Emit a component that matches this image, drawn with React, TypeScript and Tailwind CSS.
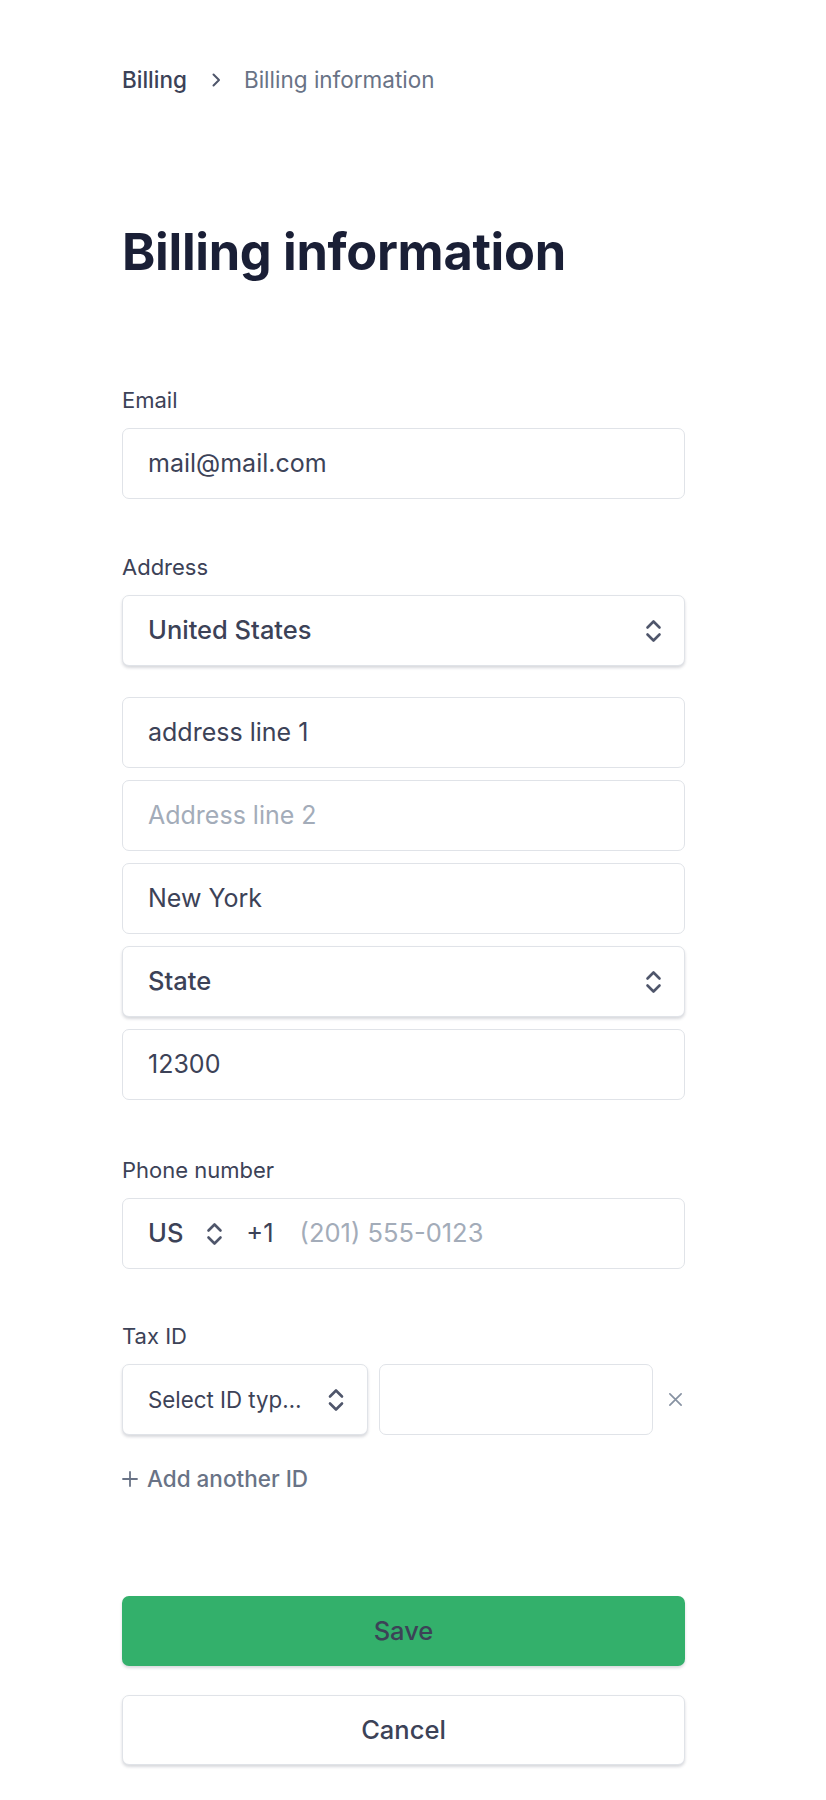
import React from 'react';

const font = { fontFamily: 'Inter, "Noto Sans", sans-serif' };

const UpDown = ({ className }: { className?: string }) => (
    <svg className={className} viewBox="0 0 18 26" fill="none" stroke="currentColor" strokeWidth="2.6" strokeLinecap="round" strokeLinejoin="round">
        <path d="M3 9.5 9 3.5 15 9.5" />
        <path d="M3 16.5 9 22.5 15 16.5" />
    </svg>
);

const Label = ({ children }: { children: React.ReactNode }) => (
    <div className="mb-[14px] mt-[1px] h-[28px] text-[22px] leading-[28px] text-[#3c4257]">{children}</div>
);

const Field = ({ value, placeholder }: { value?: string; placeholder?: string }) => (
    <div className="flex h-[71px] items-center rounded-[7px] border border-[#e0e3e8] bg-white px-[25px] text-[25px]">
        {value ? <span className="text-[#3c4257]">{value}</span> : <span className="text-[#a3acb9]">{placeholder}</span>}
    </div>
);

const Select = ({ value }: { value: string }) => (
    <div className="flex h-[71px] items-center justify-between rounded-[7px] border border-[#e0e3e8] bg-white pl-[25px] pr-[21px] text-[25.5px] font-medium text-[#3c4257] shadow-[0_2px_3px_rgba(60,66,87,0.2)]">
        <span>{value}</span>
        <UpDown className="h-[26px] w-[19px] text-[#4f566b]" />
    </div>
);

export default function App() {
    return (
        <div className="min-h-screen bg-white" style={font}>
            <div className="ml-[122px] w-[563px] pt-[66px] pb-[38px]">
                <nav className="flex h-[28px] items-center text-[22.5px] leading-[28px]">
                    <span className="font-medium text-[#3c4257]">Billing</span>
                    <svg className="ml-[24px] mr-[23px] h-[14px] w-[10px] text-[#4f566b]" viewBox="0 0 10 14" fill="none" stroke="currentColor" strokeWidth="2" strokeLinecap="round" strokeLinejoin="round">
                        <path d="M2.5 1.5 8 7l-5.5 5.5" />
                    </svg>
                    <span className="text-[#697386]">Billing information</span>
                </nav>

                <h1 className="mt-[128px] h-[60px] text-[50.5px] leading-[60px] font-bold tracking-[-0.3px] text-[#1a1f36]">
                    Billing information
                </h1>

                <div className="mt-[104px]">
                    <Label>Email</Label>
                    <Field value="mail@mail.com" />
                </div>

                <div className="mt-[54px]">
                    <Label>Address</Label>
                    <Select value="United States" />
                    <div className="mt-[31px] flex flex-col gap-[12px]">
                        <Field value="address line 1" />
                        <Field placeholder="Address line 2" />
                        <Field value="New York" />
                        <Select value="State" />
                        <Field value="12300" />
                    </div>
                </div>

                <div className="mt-[56px]">
                    <Label>Phone number</Label>
                    <div className="flex h-[71px] items-center rounded-[7px] border border-[#e0e3e8] bg-white px-[25px] text-[25.5px]">
                        <span className="font-medium text-[#3c4257]">US</span>
                        <UpDown className="ml-[22px] h-[26px] w-[19px] text-[#4f566b]" />
                        <span className="ml-[22px] text-[#3c4257]">+1</span>
                        <span className="ml-[26px] text-[#a3acb9]">(201) 555-0123</span>
                    </div>
                </div>

                <div className="mt-[53px]">
                    <Label>Tax ID</Label>
                    <div className="flex h-[71px] items-center">
                        <div className="flex h-full w-[246px] items-center justify-between rounded-[7px] border border-[#e0e3e8] bg-white pl-[25px] pr-[22px] text-[22.3px] text-[#3c4257] shadow-[0_2px_3px_rgba(60,66,87,0.2)]">
                            <span>Select ID typ…</span>
                            <UpDown className="h-[26px] w-[18px] text-[#4f566b]" />
                        </div>
                        <div className="ml-[11px] h-full w-[274px] rounded-[7px] border border-[#e0e3e8] bg-white" />
                        <svg className="ml-[15px] h-[15px] w-[15px] text-[#8792a2]" viewBox="0 0 16 16" fill="none" stroke="currentColor" strokeWidth="1.8" strokeLinecap="round">
                            <path d="M2 2l12 12M14 2 2 14" />
                        </svg>
                    </div>
                    <div className="mt-[30px] flex h-[28px] items-center text-[22.5px] leading-[28px] font-medium text-[#697386]">
                        <svg className="h-[16px] w-[16px]" viewBox="0 0 16 16" fill="none" stroke="currentColor" strokeWidth="1.8" strokeLinecap="round">
                            <path d="M8 1v14M1 8h14" />
                        </svg>
                        <span className="ml-[9px]">Add another ID</span>
                    </div>
                </div>

                <div className="mt-[103px] flex flex-col gap-[29px]">
                    <button className="h-[70px] w-full rounded-[7px] bg-[#33b06b] text-[25.5px] font-medium text-[#3c4257] shadow-[0_2px_3px_rgba(60,66,87,0.2)]">
                        Save
                    </button>
                    <button className="h-[70px] w-full rounded-[7px] border border-[#e0e3e8] bg-white text-[25.5px] font-medium text-[#3c4257] shadow-[0_2px_3px_rgba(60,66,87,0.2)]">
                        Cancel
                    </button>
                </div>
            </div>
        </div>
    );
}
